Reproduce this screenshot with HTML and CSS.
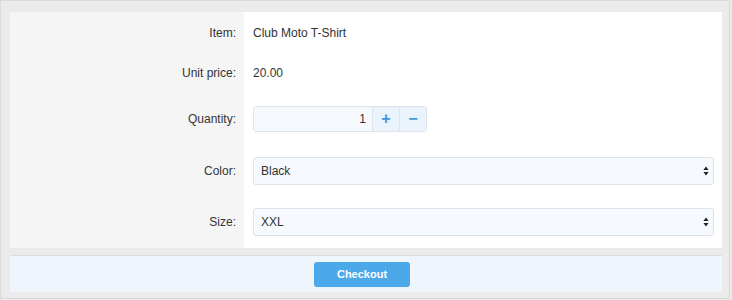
FILE: index.html
```html
<!DOCTYPE html>
<html lang="en">
<head>
    <meta charset="UTF-8">
    <title>Checkout</title>
    <link rel="stylesheet" href="styles.css">
</head>
<body>
    <div class="frame">
        <div class="form">
            <div class="label">Item:</div>
            <div class="value">Club Moto T-Shirt</div>

            <div class="label">Unit price:</div>
            <div class="value">20.00</div>

            <div class="label">Quantity:</div>
            <div class="value">
                <div class="qty">
                    <input class="qty-input" type="text" value="1">
                    <button class="qty-btn">+</button>
                    <button class="qty-btn">&minus;</button>
                </div>
            </div>

            <div class="label">Color:</div>
            <div class="value">
                <div class="select-wrap">
                    <select class="select"><option>Black</option></select>
                    <svg class="arrows" width="6" height="10" viewBox="0 0 6 10"><path d="M3 0.5 L5.6 4 H0.4 Z M3 9.5 L5.6 6 H0.4 Z" fill="#222"/></svg>
                </div>
            </div>

            <div class="label">Size:</div>
            <div class="value">
                <div class="select-wrap">
                    <select class="select"><option>XXL</option></select>
                    <svg class="arrows" width="6" height="10" viewBox="0 0 6 10"><path d="M3 0.5 L5.6 4 H0.4 Z M3 9.5 L5.6 6 H0.4 Z" fill="#222"/></svg>
                </div>
            </div>
        </div>
        <div class="footer">
            <button class="checkout">Checkout</button>
        </div>
    </div>
</body>
</html>
```
FILE: styles.css
```css
body {
    margin: 0;
    background: #ebebeb;
    font-family: "Liberation Sans", Arial, sans-serif;
    font-size: 12px;
    color: #333;
}
.frame {
    box-sizing: border-box;
    width: 730px;
    height: 299px;
    border: 1px solid #dadada;
    padding: 11px 7px 5px 9px;
}
.form {
    display: grid;
    grid-template-columns: 234px 1fr;
    grid-template-rows: 42px 38px 54px 50px 52px;
}
.label {
    background: #f5f5f5;
    display: flex;
    align-items: center;
    justify-content: flex-end;
    padding-right: 8px;
}
.value {
    background: #fff;
    display: flex;
    align-items: center;
    padding: 0 8px 0 9px;
}
.qty {
    display: flex;
    height: 26px;
    border: 1px solid #dce3ea;
    border-radius: 3px;
    box-sizing: border-box;
    overflow: hidden;
}
.qty-input {
    width: 118px;
    box-sizing: border-box;
    border: none;
    background: #f5f9fd;
    text-align: right;
    padding: 0 6px 0 0;
    font-family: inherit;
    font-size: 12px;
    color: #333;
}
.qty-btn {
    width: 27px;
    border: none;
    border-left: 1px solid #dce3ea;
    background: #eaf3fc;
    color: #3d97dc;
    font-family: inherit;
    font-weight: bold;
    font-size: 16px;
    padding: 0;
    line-height: 1;
}
.select-wrap {
    position: relative;
    flex: 1;
}
.select {
    -webkit-appearance: none;
    appearance: none;
    display: block;
    width: 100%;
    height: 28px;
    box-sizing: border-box;
    border: 1px solid #dce3ea;
    border-radius: 3px;
    background: #f6f9fd;
    padding: 0 7px;
    font-family: inherit;
    font-size: 12px;
    color: #333;
}
.arrows {
    position: absolute;
    right: 5px;
    top: 9px;
    pointer-events: none;
}
.footer {
    margin-top: 7px;
    height: 36px;
    border-top: 1px solid #d9dee4;
    background: #eef5fd;
    display: flex;
    align-items: center;
    justify-content: center;
    padding-right: 8px;
}
.checkout {
    width: 96px;
    height: 25px;
    border: none;
    border-radius: 3px;
    background: #4ba9ea;
    color: #fff;
    font-family: inherit;
    font-weight: bold;
    font-size: 11px;
}
```
